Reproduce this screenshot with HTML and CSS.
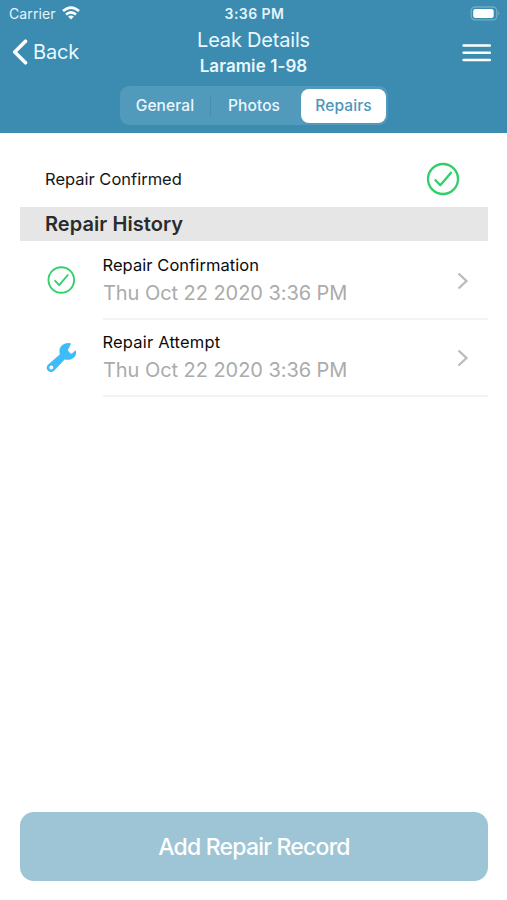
FILE: index.html
```html
<!DOCTYPE html>
<html lang="en">
<head>
<meta charset="utf-8">
<title>Leak Details</title>
<link rel="stylesheet" href="styles.css">
</head>
<body>
<div class="screen">
  <header class="header">
    <div class="status">
      <div class="carrier"><span>Carrier</span>
        <svg class="wifi" width="18" height="14" viewBox="0 0 18 14" fill="none" stroke="#fff" stroke-width="2.6"><path d="M1 5.1Q9-1.9 17 5.1M4 8.5Q9 4.1 14 8.5"/><path d="M9 13.5 6.1 10.6Q9 8.4 11.9 10.6Z" fill="#fff" stroke="none"/></svg>
      </div>
      <span class="time">3:36 PM</span>
      <svg class="battery" width="30" height="16" viewBox="0 0 30 16"><rect x="1.2" y="1" width="25.6" height="12.8" rx="3.8" fill="none" stroke="#75abc6" stroke-width="1.3"/><rect x="3.2" y="2.9" width="20.5" height="9" rx="2.2" fill="#fff"/><path d="M28.2 5.2q2.2 2.2 0 4.4z" fill="#75abc6"/></svg>
    </div>
    <nav class="nav">
      <a class="back"><svg width="16" height="26" viewBox="0 0 16 26" fill="none" stroke="#fff" stroke-width="3.6" stroke-linecap="round" stroke-linejoin="round"><path d="M13.5 2.2 2.7 13l10.8 10.8"/></svg><span>Back</span></a>
      <div class="titles"><h1>Leak Details</h1><h2>Laramie 1-98</h2></div>
      <svg class="menu" width="29" height="20" viewBox="0 0 29 20" stroke="#fff" stroke-width="2.5" stroke-linecap="round"><path d="M1.6 2.6h26.2M1.6 9.8h26.2M1.6 17h26.2"/></svg>
    </nav>
    <div class="tabs">
      <span class="tab general">General</span><span class="tab photos">Photos</span><span class="tab active">Repairs</span>
    </div>
  </header>
  <main class="content">
    <div class="confirmed"><span>Repair Confirmed</span>
      <svg width="34" height="34" viewBox="0 0 34 34" fill="none" stroke="#2fcf6a" stroke-width="2.3" stroke-linecap="round" stroke-linejoin="round"><circle cx="17" cy="17" r="15"/><path d="m9.5 18.2 4.8 5L25 10.8"/></svg>
    </div>
    <h3 class="section">Repair History</h3>
    <div class="row">
      <svg class="kind" width="30" height="30" viewBox="0 0 30 30" fill="none" stroke="#35cf6d" stroke-width="1.9" stroke-linecap="round" stroke-linejoin="round"><circle cx="15.3" cy="15" r="12.8"/><path d="m9.2 15.8 4 4.3L21.8 10"/></svg>
      <div class="entry"><div><div class="name">Repair Confirmation</div><div class="date">Thu Oct 22 2020 3:36 PM</div></div>
      <svg class="chevron" width="12" height="18" viewBox="0 0 12 18" fill="none" stroke="#bbb" stroke-width="2.3"><path d="m1.5 1.5 8 7.5-8 7.5"/></svg></div>
    </div>
    <div class="row second">
      <svg class="kind" width="30" height="30" viewBox="0 0 30 30"><path transform="translate(.6 .2)" fill="#3dbcfb" fill-rule="evenodd" d="M24.6 1.2C20-.6 13 2.4 12.8 8.6c0 1.5.4 2.5.3 3.6L1.9 22.1c-2.3 2-2.3 4.8-.5 6.5 1.8 1.7 4.8 1.6 6.6-.6L18 17.2c3.7 1 7.4.3 9.6-2.1 2-2.1 2.3-5 1.4-7.1l-3.4 3.1q-1.1.8-2.1-.2l-1.7-1.9q-.9-1.1 0-2.2zM4.7 23.3a2 2 0 1 0 0 4 2 2 0 0 0 0-4z"/></svg>
      <div class="entry"><div><div class="name attempt">Repair Attempt</div><div class="date">Thu Oct 22 2020 3:36 PM</div></div>
      <svg class="chevron" width="12" height="18" viewBox="0 0 12 18" fill="none" stroke="#bbb" stroke-width="2.3"><path d="m1.5 1.5 8 7.5-8 7.5"/></svg></div>
    </div>
  </main>
  <button class="add">Add Repair Record</button>
</div>
</body>
</html>
```

FILE: styles.css
```css
* { box-sizing: border-box; }
body { margin: 0; background: #fff; font-family: Inter, "Liberation Sans", sans-serif; }
svg { display: block; flex: none; }
h1, h2, h3 { margin: 0; }
.screen { height: 900px; display: flex; flex-direction: column; }
.header { height: 133px; background: #3b8cb0; color: #fff; flex: none; }
.status { height: 27px; display: grid; grid-template-columns: 1fr auto 1fr; align-items: center; padding: 0 7px 0 9px; }
.carrier { display: flex; align-items: center; gap: 6px; font-size: 14px; letter-spacing: .1px; color: #e5f4fb; }
.wifi { margin-top: -1px; }
.time { font-size: 14px; font-weight: 600; letter-spacing: .45px; color: #e5f4fb; }
.battery { justify-self: end; }
.nav { height: 59px; display: grid; grid-template-columns: 1fr auto 1fr; padding: 0 16px 0 12px; }
.back { display: flex; align-items: center; gap: 5px; height: 50px; font-size: 20px; letter-spacing: -.15px; color: #e9f8ff; }
.titles { text-align: center; margin: 0 -2px 0 2px; }
h1 { font-size: 20px; line-height: 27px; font-weight: 400; letter-spacing: -.2px; color: #e9f8ff; }
h2 { font-size: 17px; line-height: 25px; font-weight: 600; letter-spacing: .08px; color: #e9f8ff; }
.menu { justify-self: end; margin-top: 16px; }
.tabs { width: 268px; height: 39px; margin: 0 auto; padding: 3px; display: grid; grid-template-columns: 87px 91px 85px; border-radius: 9px; background: #519abb; }
.tab { display: flex; align-items: center; justify-content: center; height: 34px; margin-top: -1px; font-size: 15.5px; font-weight: 500; letter-spacing: .12px; color: #e9f8ff; padding-top: 1px; }
.general { padding-right: 2px; }
.photos { padding-right: 2px; background: linear-gradient(#438fb2, #438fb2) 0 50% / 1px 21px no-repeat; }
.active { color: #4b97ba; background: #fff; border-radius: 8px; margin-top: 0; padding: 0 0 1px 1px; }
.content { flex: 1; padding: 28px 19px 0 20px; }
.confirmed { height: 46px; padding: 0 28px 0 25px; display: flex; align-items: flex-start; justify-content: space-between; font-size: 16.5px; line-height: 36px; color: #161616; }
.confirmed svg { margin-top: 1px; }
.section { height: 34px; margin-bottom: 1px; padding-left: 25px; background: #e6e6e6; font-size: 20px; line-height: 35px; font-weight: 600; letter-spacing: .06px; color: #2b2b2b; }
.row { height: 77.5px; display: flex; padding-left: 26px; }
.kind { margin: 23px 27px 0 0; }
.second .kind { margin-top: 22px; }
.entry { flex: 1; display: flex; justify-content: space-between; border-bottom: 2px solid #f3f3f3; padding-top: 10px; }
.second .entry { padding-top: 9px; }
.name { font-size: 16.5px; line-height: 27px; letter-spacing: .06px; margin-left: -.5px; color: #0b0b0b; }
.attempt { letter-spacing: .18px; }
.date { font-size: 20px; line-height: 29px; letter-spacing: -.06px; color: #ababab; }
.chevron { margin: 20px 19px 0 0; }
.add { height: 69px; margin: 0 19px 19px 20px; border: 0; border-radius: 14px; background: #9dc5d5; color: #fff; font: 500 23px/69px Inter, sans-serif; padding: 1px 0 0; letter-spacing: -.8px; }
```
